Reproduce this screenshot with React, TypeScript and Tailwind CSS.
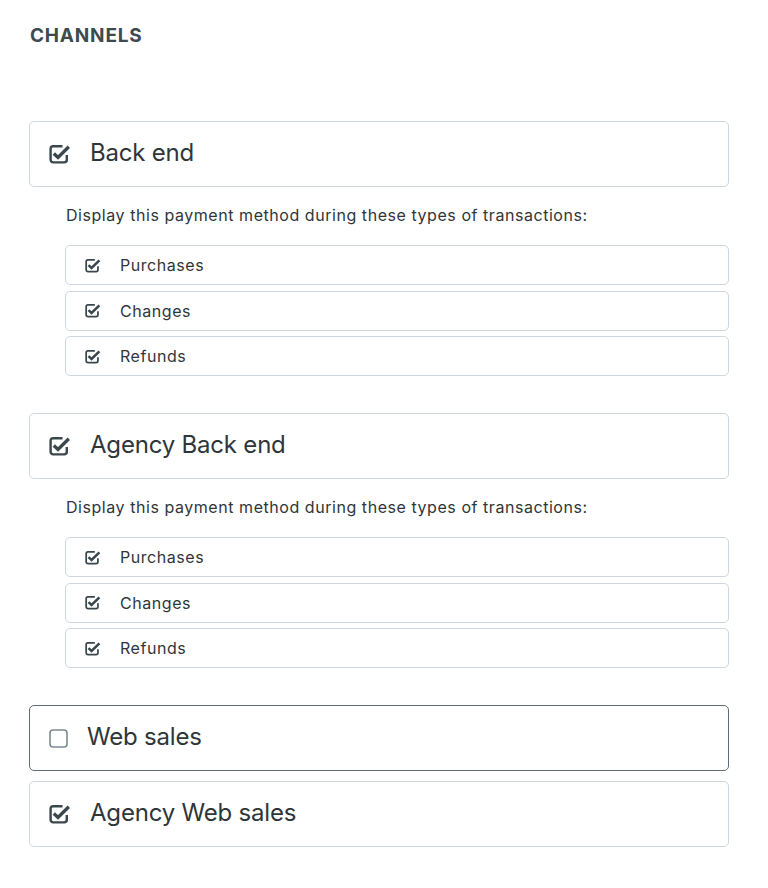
import { useState } from 'react';

type SubKey = 'purchases' | 'changes' | 'refunds';

interface Channel {
  id: string;
  label: string;
  enabled: boolean;
  subs?: Record<SubKey, boolean>;
}

const SUB_LABELS: { key: SubKey; label: string }[] = [
  { key: 'purchases', label: 'Purchases' },
  { key: 'changes', label: 'Changes' },
  { key: 'refunds', label: 'Refunds' },
];

const INITIAL: Channel[] = [
  { id: 'backend', label: 'Back end', enabled: true, subs: { purchases: true, changes: true, refunds: true } },
  { id: 'agency-backend', label: 'Agency Back end', enabled: true, subs: { purchases: true, changes: true, refunds: true } },
  { id: 'web', label: 'Web sales', enabled: false },
  { id: 'agency-web', label: 'Agency Web sales', enabled: true },
];

function CheckIcon({ checked, small }: { checked: boolean; small?: boolean }) {
  if (!checked) {
    return (
      <svg width={small ? 15 : 19} height={small ? 15 : 19} viewBox="0 0 19 19" className="flex-shrink-0">
        <rect x="1" y="1" width="17" height="17" rx="3" fill="none" stroke="#7d8a92" strokeWidth="1.6" />
      </svg>
    );
  }
  return (
    <svg width={small ? 16 : 22} height={small ? 15 : 20} viewBox="0 0 22 20" className="flex-shrink-0">
      <path
        d="M13.5 2.2 H4.2 A2.6 2.6 0 0 0 1.6 4.8 V15.8 A2.6 2.6 0 0 0 4.2 18.4 H15.2 A2.6 2.6 0 0 0 17.8 15.8 V11"
        fill="none"
        stroke="#3a474d"
        strokeWidth="2.4"
      />
      <path d="M4.8 9.4 L9 13.4 L19.8 2.8" fill="none" stroke="#3a474d" strokeWidth="3.4" />
    </svg>
  );
}

export default function App() {
  const [channels, setChannels] = useState<Channel[]>(INITIAL);

  const toggle = (id: string) =>
    setChannels(cs => cs.map(c => (c.id === id ? { ...c, enabled: !c.enabled } : c)));

  const toggleSub = (id: string, key: SubKey) =>
    setChannels(cs =>
      cs.map(c => (c.id === id && c.subs ? { ...c, subs: { ...c.subs, [key]: !c.subs[key] } } : c)),
    );

  return (
    <div className="w-[768px] min-h-[888px] bg-white px-[29px] pt-[24px] pb-10 font-['Inter',sans-serif] text-[#30393e]">
      {/* Section title */}
      <h2 className="text-[19px] leading-[24px] font-bold text-[#3d4a50] tracking-[0.8px] pl-px">CHANNELS</h2>

      <div className="mt-[73px] w-[700px] flex flex-col">
        {channels.map((c, i) => {
          const prev = channels[i - 1];
          const spacing = i === 0 ? '' : prev?.subs ? 'mt-[37px]' : 'mt-[10px]';
          return (
            <div key={c.id} className={spacing}>
              {/* Channel toggle */}
              <button
                type="button"
                onClick={() => toggle(c.id)}
                className={`w-full h-[66px] flex items-center gap-[19px] pl-[19px] rounded-[5px] border bg-white text-left cursor-pointer ${
                  c.id === 'web' ? 'border-[#5f6b73]' : 'border-[#cfd6dc]'
                }`}
              >
                <CheckIcon checked={c.enabled} />
                <span className="text-[24px] leading-[30px] text-[#2f363a] tracking-[-0.2px] -mt-[2px]">{c.label}</span>
              </button>

              {/* Transaction types */}
              {c.subs && (
                <div className="pl-[36px]">
                  <p className="mt-[18px] mb-[20px] pl-px text-[16px] leading-[20px] tracking-[0.55px] text-[#2f363a]">
                    Display this payment method during these types of transactions:
                  </p>
                  <div className="flex flex-col gap-[5.5px]">
                    {SUB_LABELS.map(s => (
                      <button
                        key={s.key}
                        type="button"
                        onClick={() => toggleSub(c.id, s.key)}
                        className="w-full h-[40px] flex items-center gap-[19px] pl-[19px] rounded-[5px] border border-[#cfd6dc] bg-white text-left cursor-pointer"
                      >
                        <CheckIcon checked={c.subs![s.key]} small />
                        <span className="text-[16px] leading-[20px] tracking-[0.55px] text-[#2f363a]">{s.label}</span>
                      </button>
                    ))}
                  </div>
                </div>
              )}
            </div>
          );
        })}
      </div>
    </div>
  );
}
